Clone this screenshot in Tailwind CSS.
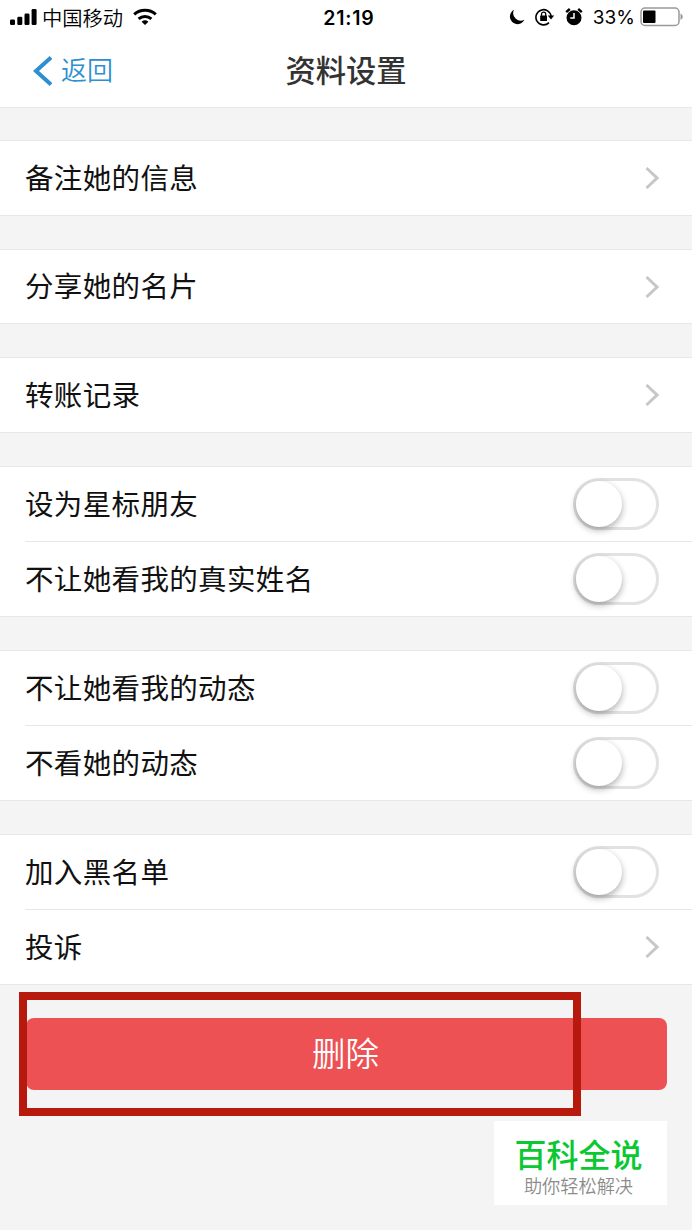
<!DOCTYPE html>
<html lang="zh-CN">
<head>
  <meta charset="UTF-8" />
  <meta name="viewport" content="width=device-width, initial-scale=1" />
  <title>资料设置</title>
  <script src="https://cdn.jsdelivr.net/npm/@tailwindcss/browser@4"></script>
</head>
<body class="bg-[#f4f4f4] font-['Noto_Sans_CJK_SC',sans-serif] text-[#111]">
  <div class="relative w-[692px] h-[1230px] overflow-hidden">

    <!-- Status bar + nav -->
    <header class="h-[108px] bg-white border-b border-[#e9e9e9]">
      <div class="grid grid-cols-3 h-[34px] items-center text-black">
        <div class="flex items-center pl-[10px]">
          <svg class="w-[27px] h-[18px]" viewBox="0 0 27 18">
            <rect x="0" y="11.5" width="5" height="5.5" rx="1.3" />
            <rect x="7.3" y="8.8" width="5" height="8.2" rx="1.3" />
            <rect x="14.5" y="5.5" width="5" height="11.5" rx="1.3" />
            <rect x="21.6" y="1" width="5" height="16" rx="1.3" />
          </svg>
          <span class="ml-[5px] text-[20.3px] leading-[34px] font-[350] whitespace-nowrap">中国移动</span>
          <svg class="ml-[10px] w-[24px] h-[18px]" viewBox="0 0 24 18" fill="none" stroke="#000" stroke-width="3">
            <path d="M1.2 6.4a16.5 16.5 0 0 1 21.6 0" />
            <path d="M5.6 10.9a10 10 0 0 1 12.8 0" />
            <path d="M12 17l-3.4-3.2a5.2 5.2 0 0 1 6.8 0z" fill="#000" stroke="none" />
          </svg>
        </div>
        <div class="pl-[6px] pt-[2px] text-center font-['Inter','Liberation_Sans',sans-serif] font-semibold text-[19.5px] leading-[30px] tracking-[0.8px]">21:19</div>
        <div class="flex items-center justify-end pr-[9px]">
          <svg class="w-[16px] h-[16px]" viewBox="0 0 16 16">
            <path d="M5 .8A7.6 7.6 0 1 0 15.4 10.8 7.6 7.6 0 0 1 5 .8z" />
          </svg>
          <svg class="ml-[10px] w-[20px] h-[18px]" viewBox="0 0 20 18">
            <path d="M14 14.6A7.6 7.6 0 1 1 16.1 8.5" fill="none" stroke="#000" stroke-width="1.6" />
            <path d="M12.8 7.6h6.4L16 11.6z" />
            <rect x="5.2" y="7.6" width="6.8" height="5.4" rx=".6" />
            <path d="M6.5 8.2V6.3a2.1 2.1 0 0 1 4.2 0v1.9" fill="none" stroke="#000" stroke-width="1.3" />
          </svg>
          <svg class="ml-[10px] w-[18px] h-[18px]" viewBox="0 0 18 18">
            <circle cx="9" cy="9.7" r="7.5" />
            <path d="M1.2 4.2L4.8 1M16.8 4.2L13.2 1" stroke="#000" stroke-width="2.4" />
            <path d="M9 5v5H5.2" fill="none" stroke="#fff" stroke-width="1.5" />
          </svg>
          <span class="ml-[10px] pt-[2px] font-['Inter','Liberation_Sans',sans-serif] text-[19px] leading-[30px]">33%</span>
          <svg class="ml-[5px] w-[43px] h-[20px]" viewBox="0 0 43 20">
            <rect x="1" y="1" width="38" height="17.5" rx="4" fill="none" stroke="#999" stroke-width="1.5" />
            <rect x="3" y="3.5" width="12.5" height="12.5" rx="1" />
            <path d="M40.5 6.5c3 1.5 3 5 0 6.5z" fill="#999" />
          </svg>
        </div>
      </div>
      <nav class="grid grid-cols-3 h-[73px] items-center">
        <div class="flex items-center pl-[32px] text-[#2d8fcf]">
          <svg class="w-[20px] h-[30px]" viewBox="0 0 20 30" fill="none" stroke="#2d8fcf" stroke-width="4">
            <path d="M19 1.5L4 15l15 13.5" />
          </svg>
          <span class="ml-[9px] pb-[3px] text-[26px] leading-[40px] font-[350]">返回</span>
        </div>
        <h1 class="pb-[3px] text-center text-[30.3px] leading-[44px] font-medium text-[#333] whitespace-nowrap">资料设置</h1>
      </nav>
    </header>

    <!-- Settings groups -->
    <main id="groups" class="flex flex-col gap-[33px] pt-[32px]"></main>

    <!-- Delete button -->
    <div class="pl-[26px] pr-[25px] pt-[33px]">
      <button class="block w-full h-[72px] pr-[2px] pb-[4px] rounded-lg bg-[#ed5153] text-white text-[33.5px] leading-[68px] font-[350]">删除</button>
    </div>

    <div class="absolute left-[19px] top-[992px] w-[562px] h-[124px] border-8 border-[#b8190d]"></div>

    <!-- Watermark -->
    <div class="absolute left-[494px] top-[1121px] w-[173px] h-[84px] bg-white text-center whitespace-nowrap">
      <p class="pt-[14px] pr-[4px] text-[32px] leading-[36px] font-medium text-[#0ac832]">百科全说</p>
      <p class="pt-[5px] pr-[4px] text-[18.2px] leading-[18px] font-[350] text-[#8c8c8c]">助你轻松解决</p>
    </div>
  </div>

  <script>
    const groups = [
      { height: 76, rows: [['备注她的信息', 'link']] },
      { height: 75, rows: [['分享她的名片', 'link']] },
      { height: 76, rows: [['转账记录', 'link']] },
      { height: 151, rows: [['设为星标朋友', 'switch'], ['不让她看我的真实姓名', 'switch']] },
      { height: 151, rows: [['不让她看我的动态', 'switch'], ['不看她的动态', 'switch']] },
      { height: 151, rows: [['加入黑名单', 'switch'], ['投诉', 'link']] }
    ];

    const controls = {
      link: `
        <svg class="mr-[33px] w-[14px] h-[24px]" viewBox="0 0 14 24" fill="none" stroke="#c7c7c7" stroke-width="3">
          <path d="M1.5 2L12 12 1.5 22" />
        </svg>`,
      switch: `
        <div class="mr-[33px] w-[86px] h-[52px] rounded-full border-[3px] border-[#e2e2e2] bg-white">
          <div class="size-[46px] rounded-full bg-white shadow-[0_3px_7px_rgba(0,0,0,0.32)]"></div>
        </div>`
    };

    document.getElementById('groups').innerHTML = groups.map(group => `
      <section class="flex flex-col bg-white border-y border-[#e7e7e7]" style="height: ${group.height}px">
        ${group.rows.map(([label, type], i) => `
          <div class="flex-1 flex items-center justify-between ml-[25px] ${i ? 'border-t border-[#e7e7e7]' : ''}">
            <span class="pb-[3px] text-[28.5px] leading-[40px] tracking-[0.35px]">${label}</span>
            ${controls[type]}
          </div>`).join('')}
      </section>`).join('');
  </script>
</body>
</html>
